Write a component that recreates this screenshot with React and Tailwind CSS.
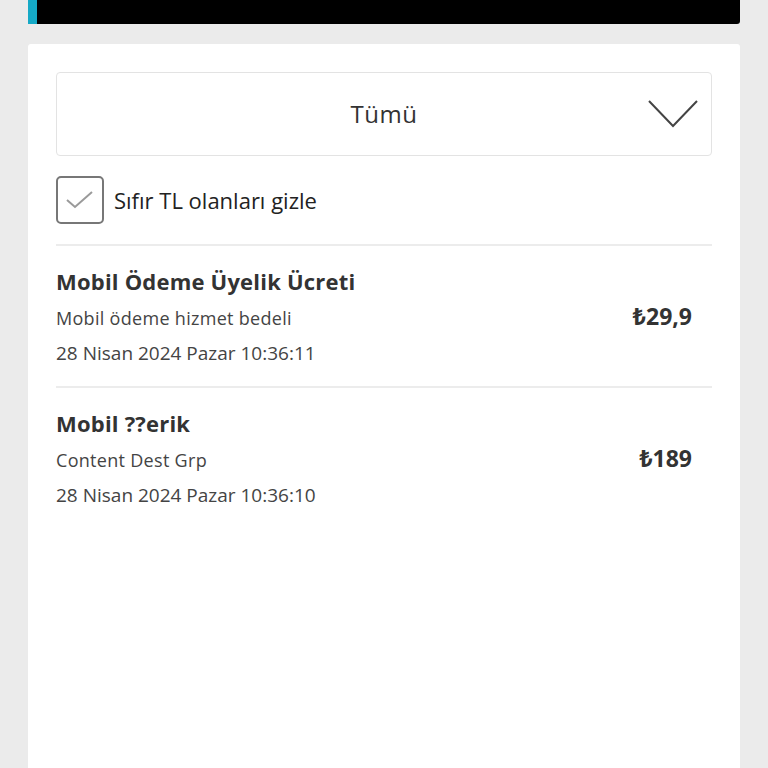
const items = [
  {
    title: 'Mobil Ödeme Üyelik Ücreti',
    desc: 'Mobil ödeme hizmet bedeli',
    date: '28 Nisan 2024 Pazar 10:36:11',
    amount: '₺29,9',
  },
  {
    title: 'Mobil ??erik',
    desc: 'Content Dest Grp',
    date: '28 Nisan 2024 Pazar 10:36:10',
    amount: '₺189',
  },
];

export default function App() {
  return (
    <div
      className="min-h-[768px] h-[768px] overflow-hidden bg-[#ebebeb] px-[28px] text-[#333]"
      style={{ fontFamily: '"Open Sans", "Noto Sans", sans-serif' }}
    >
      <div className="flex h-[24px] overflow-hidden rounded-br-[3px] bg-black">
        <div className="w-[9px] bg-[#15a9c6]" />
      </div>

      <div className="mt-[20px] min-h-[724px] rounded-t-[3px] bg-white px-[28px] pt-[28px]">
        <div className="relative flex h-[84px] items-center justify-center rounded-[4px] border border-[#e3e3e3]">
          <span className="text-[24px] tracking-[0.5px] text-[#333]">Tümü</span>
          <svg
            className="absolute right-[13px] top-[27px]"
            width="50"
            height="28"
            viewBox="0 0 50 28"
            fill="none"
          >
            <path d="M1 1 L25 26 L49 1" stroke="#444" strokeWidth="2" />
          </svg>
        </div>

        <div className="mt-[20px] flex items-center gap-[10px]">
          <div className="flex h-[48px] w-[48px] items-center justify-center rounded-[5px] border-2 border-[#777]">
            <svg width="30" height="22" viewBox="0 0 30 22" fill="none">
              <path d="M2 11 L10 18 L27 3" stroke="#9a9a9a" strokeWidth="2" />
            </svg>
          </div>
          <span className="text-[22px] text-[#222]">Sıfır TL olanları gizle</span>
        </div>

        <div className="mt-[20px]">
          {items.map((it) => (
            <div key={it.date} className="flex items-center border-t-2 border-[#ececec] pb-[18px] pt-[19px]">
              <div className="flex-1">
                <div className="text-[22px] font-bold leading-[32px] tracking-[0.2px] text-[#333]">
                  {it.title}
                </div>
                <div className="mt-[6px] text-[18px] leading-[30px] tracking-[0.3px] text-[#444]">{it.desc}</div>
                <div className="mt-[5px] text-[19px] leading-[30px] text-[#444]">{it.date}</div>
              </div>
              <div className="mr-[20px] text-[23px] font-bold text-[#333]">{it.amount}</div>
            </div>
          ))}
        </div>
      </div>
    </div>
  );
}
